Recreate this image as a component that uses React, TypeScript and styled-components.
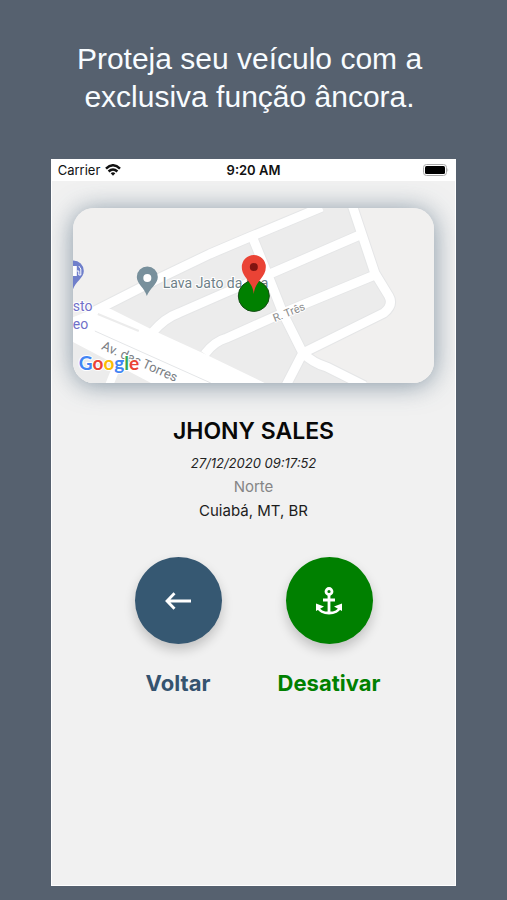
import React from "react";
import styled, { createGlobalStyle } from "styled-components";

const GlobalStyle = createGlobalStyle`
  * { box-sizing: border-box; }
  body { margin: 0; background: #56616f; }
`;

const Page = styled.main`
  min-height: 100vh;
  padding: 40px 10% 14px;
  display: flex;
  flex-direction: column;
  gap: 43px;
  background: #56616f;
`;

const Headline = styled.h1`
  margin: 0;
  padding-right: 8px;
  font: 400 30px/38px "Liberation Sans", Arial, sans-serif;
  text-align: center;
  color: #f8fcff;
`;

const Phone = styled.section`
  flex: 1;
  display: flex;
  flex-direction: column;
  background: #f1f1f1;
  border: 1px solid #fff;
  border-top: 0;
  font-family: Inter, sans-serif;
`;

const StatusBar = styled.header`
  display: grid;
  grid-template-columns: 1fr auto 1fr;
  align-items: center;
  height: 22px;
  padding: 0 6px;
  background: #fff;
  color: #111;
  font-size: 13px;
  line-height: 16px;
`;

const Carrier = styled.span`
  display: flex;
  align-items: center;
  gap: 5px;
`;

const Clock = styled.time`
  font-weight: 600;
`;

const BatteryIcon = styled.svg`
  justify-self: end;
`;

const Content = styled.div`
  display: flex;
  flex-direction: column;
  padding: 27px 21px;
  overflow: hidden;
`;

const MapCard = styled.div`
  height: 175px;
  border-radius: 21px;
  overflow: hidden;
  background: #f1f0ef;
  box-shadow: 0 2px 26px rgba(60, 88, 112, 0.6);
`;

const MapDrawing = styled.svg`
  display: block;
  width: 100%;
  height: 100%;
`;

const Details = styled.div`
  display: flex;
  flex-direction: column;
  align-items: center;
  margin-top: 32px;
  text-align: center;
`;

const Name = styled.h2`
  margin: 0 0 8px;
  font-size: 23px;
  line-height: 32px;
  font-weight: 600;
  color: #080808;
`;

const Stamp = styled.time`
  margin-bottom: 4px;
  font-size: 13px;
  line-height: 16px;
  font-style: italic;
  color: #222;
`;

const Line = styled.p<{ $color: string }>`
  margin: 0;
  font-size: 15px;
  line-height: 24px;
  color: ${(p) => p.$color};
`;

const Actions = styled.div`
  display: grid;
  grid-template-columns: 106px 106px;
  justify-content: center;
  gap: 45px;
  margin-top: 34px;
`;

const Action = styled.button<{ $color: string }>`
  display: flex;
  flex-direction: column;
  align-items: center;
  gap: 24px;
  padding: 0;
  border: 0;
  background: none;
  font: 700 22px/30px Inter, sans-serif;
  color: ${(p) => p.$color};
  cursor: pointer;
`;

const Disc = styled.span<{ $color: string }>`
  display: flex;
  align-items: center;
  justify-content: center;
  width: 87px;
  height: 87px;
  border-radius: 50%;
  background: ${(p) => p.$color};
  color: #fff;
  box-shadow: 0 6px 12px rgba(0, 0, 0, 0.2);
`;

const roads = [
  "M20 104 L87 70 L137 46 L177 29 L249 -1",
  "M80 124 Q92 110 106 105 L154 84 L197 66 L287 27",
  "M132 146 Q142 133 154 130 L210 105 L302 67",
  "M279 -4 L302 65 L316 88 Q321 97 311 105 L230 145",
  "M180 30 L197 72 L210 105 L230 145 L213 178",
  "M230 145 Q240 155 254 159 L292 178",
];

function StreetMap() {
  return (
    <MapDrawing viewBox="0 0 362 175" preserveAspectRatio="xMidYMid slice" role="img" aria-label="Mapa">
      <rect width="362" height="175" fill="#f1f0ef" />
      <path d="M20 104 L177 29 L249 0 H279 L302 65 L319 97 L230 145 L290 175 H0 V112Z" fill="#ececec" />
      <g fill="none" strokeLinejoin="round">
        {roads.map((d) => (
          <path key={d} d={d} stroke="#e5e6e7" strokeWidth="11" />
        ))}
        {roads.map((d) => (
          <path key={d} d={d} stroke="#fff" strokeWidth="9" />
        ))}
      </g>
      <path d="M-2 110 L28 98 L38 101 L84 124 L132 146 L196 177 H82 L0 134Z" fill="#fff" />
      <path d="M25 106 L66 123" stroke="#ececec" strokeWidth="2" />
      <path d="M22 123 L138 175" stroke="#e4e6e8" strokeWidth="1" />
      <path d="M36 178 L44 158" stroke="#fff" strokeWidth="8" />
      <g fontFamily="Roboto, sans-serif" fill="#6d7f88" stroke="#fff" paintOrder="stroke">
        <text x="90" y="80" fontSize="14" strokeWidth="2">Lava Jato da Ilha</text>
        <text x="28" y="141" fontSize="13" strokeWidth="2" fill="#7b8085" transform="rotate(24 28 141)">Av. das Torres</text>
        <text x="202" y="114" fontSize="11" strokeWidth="2" fill="#8b8b8b" transform="rotate(-22 202 114)">R. Três</text>
        <text x="0" y="103" fontSize="14" strokeWidth="2" fill="#7070c8">sto</text>
        <text x="0" y="121" fontSize="14" strokeWidth="2" fill="#7070c8">eo</text>
      </g>
      <path d="M74 88 C72 80 64 76 64 69 A10.500 10.500 0 0 1 85 69 C85 76 77 80 74 88Z" fill="#78909c" />
      <circle cx="74.500" cy="70" r="4" fill="#fff" />
      <path d="M0 82 C2 74 11 70 11 63 A10.500 10.500 0 0 0 -10 63 C-10 70 -2 74 0 82Z" fill="#6f7fcb" />
      <path d="M-4 58 H4 V68 H-4Z" fill="#fff" />
      <path d="M4 63 H6 V67 H8 V61 L6 58" fill="none" stroke="#fff" />
      <circle cx="181" cy="88" r="15.500" fill="green" stroke="#174d17" />
      <path d="M181 86 C180 73 169 70 169 59 A12 12 0 0 1 193 59 C193 70 182 73 181 86Z" fill="#ea4335" />
      <circle cx="181" cy="59" r="4" fill="#811411" />
      <text x="6" y="162" fontFamily="Lato, sans-serif" fontSize="19" fontWeight="700" stroke="#fff" strokeWidth="2" paintOrder="stroke">
        <tspan fill="#4285f4">G</tspan>
        <tspan fill="#ea4335">o</tspan>
        <tspan fill="#fbbc05">o</tspan>
        <tspan fill="#4285f4">g</tspan>
        <tspan fill="#34a853">l</tspan>
        <tspan fill="#ea4335">e</tspan>
      </text>
    </MapDrawing>
  );
}

function WifiIcon() {
  return (
    <svg width="16" height="12" viewBox="0 0 16 12" fill="none" stroke="#111" strokeWidth="2.500" aria-hidden="true">
      <path d="M1 4.600 Q8 -2 15 4.600" />
      <path d="M3.600 7.500 Q8 3.400 12.400 7.500" />
      <path d="M8 11.800 L5.700 9.300 Q8 7.300 10.300 9.300Z" fill="#111" stroke="none" />
    </svg>
  );
}

function ArrowIcon() {
  return (
    <svg width="28" height="20" viewBox="0 0 28 20" fill="none" stroke="#fff" strokeWidth="2.800" aria-hidden="true">
      <path d="M27 10 H3 M10.500 2.200 L3 10 L10.500 17.800" />
    </svg>
  );
}

function AnchorIcon() {
  return (
    <svg width="28" height="30" viewBox="0 0 28 30" fill="none" stroke="#fff" strokeWidth="2.800" aria-hidden="true">
      <circle cx="14" cy="5.500" r="3" />
      <path d="M14 8.500 V27 M8 14 H20" />
      <path d="M3 21 C4 25 9 27 14 27 C19 27 24 25 25 21" />
      <path d="M1 17.500 L9 20.500 L1 25Z M27 17.500 L19 20.500 L27 25Z" fill="#fff" stroke="none" />
    </svg>
  );
}

export default function App() {
  return (
    <>
      <GlobalStyle />
      <Page>
        <Headline>
          Proteja seu veículo com a<br />exclusiva função âncora.
        </Headline>
        <Phone>
          <StatusBar>
            <Carrier>Carrier <WifiIcon /></Carrier>
            <Clock>9:20 AM</Clock>
            <BatteryIcon width="26" height="12" viewBox="0 0 26 12" role="img" aria-label="Bateria">
              <rect x="0.500" y="0.500" width="23" height="11" rx="3" fill="#fff" stroke="#aaa" />
              <rect x="2" y="2" width="20" height="8" rx="1.500" fill="#000" />
              <path d="M24.500 4 Q26 6 24.500 8Z" fill="#aaa" />
            </BatteryIcon>
          </StatusBar>
          <Content>
            <MapCard><StreetMap /></MapCard>
            <Details>
              <Name>JHONY SALES</Name>
              <Stamp dateTime="2020-12-27T09:17:52">27/12/2020 09:17:52</Stamp>
              <Line $color="#858585">Norte</Line>
              <Line $color="#1c1c1c">Cuiabá, MT, BR</Line>
            </Details>
            <Actions>
              <Action type="button" $color="#35536f">
                <Disc $color="#365872"><ArrowIcon /></Disc>
                Voltar
              </Action>
              <Action type="button" $color="#008000">
                <Disc $color="#008000"><AnchorIcon /></Disc>
                Desativar
              </Action>
            </Actions>
          </Content>
        </Phone>
      </Page>
    </>
  );
}
